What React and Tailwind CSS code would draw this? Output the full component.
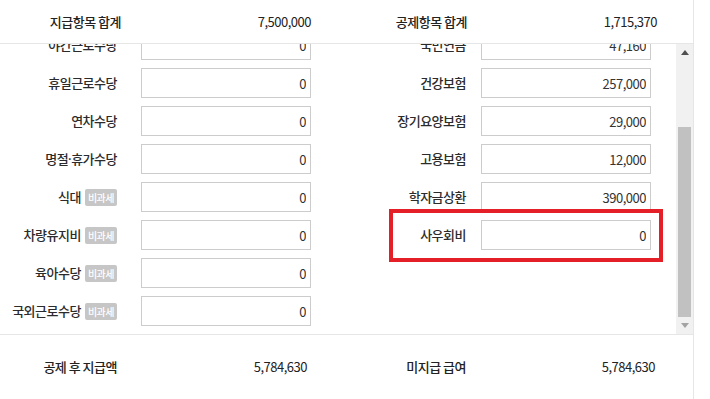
import React from 'react'

const left = [
  { label: '야간근로수당', value: '0' },
  { label: '휴일근로수당', value: '0' },
  { label: '연차수당', value: '0' },
  { label: <>명절<span style={{ fontFamily: '"Noto Sans", sans-serif' }}>·</span>휴가수당</>, value: '0' },
  { label: '식대', value: '0', taxFree: true },
  { label: '차량유지비', value: '0', taxFree: true },
  { label: '육아수당', value: '0', taxFree: true },
  { label: '국외근로수당', value: '0', taxFree: true },
]

const right = [
  { label: '국민연금', value: '47,160' },
  { label: '건강보험', value: '257,000' },
  { label: '장기요양보험', value: '29,000' },
  { label: '고용보험', value: '12,000' },
  { label: '학자금상환', value: '390,000' },
  { label: '사우회비', value: '0' },
]

function Field({ value }) {
  return (
    <input
      readOnly
      value={value}
      className="w-[170px] h-[30px] border border-[#cccccc] bg-white text-right pr-[4px] text-[13px] tracking-[-0.5px] text-[#333] outline-none"
    />
  )
}

function Badge() {
  return (
    <span className="ml-[4px] h-[17px] px-[3px] rounded-[2px] bg-[#c6c6c6] text-white text-[10px] leading-[17px] tracking-[-0.5px]">
      비과세
    </span>
  )
}

export default function App() {
  return (
    <div
      className="relative w-[710px] h-[399px] bg-white overflow-hidden text-[#2b2b2b]"
      style={{ fontFamily: '"Noto Sans CJK KR", "Noto Sans", sans-serif' }}
    >
      <div className="w-[694px] h-full border-r border-[#e6e6e6] flex flex-col">
        {/* totals header */}
        <div className="h-[44px] shrink-0 border-b border-[#e6e6e6] flex items-center text-[13px] tracking-[-0.5px] text-[#222] font-medium">
          <span className="w-[121px] text-right">지급항목 합계</span>
          <span className="w-[190px] text-right font-normal">7,500,000</span>
          <span className="w-[156px] text-right">공제항목 합계</span>
          <span className="w-[190px] text-right font-normal">1,715,370</span>
        </div>

        {/* scrolled item list */}
        <div className="h-[291px] shrink-0 border-b border-[#e6e6e6] flex">
          <div className="flex-1 overflow-hidden">
            <div className="-mt-[14px] flex flex-col gap-[8px]">
              {left.map((l, i) => {
                const r = right[i]
                return (
                  <div key={i} className="h-[30px] flex items-center text-[13px] tracking-[-0.5px]">
                    <div className="w-[117px] flex items-center justify-end whitespace-nowrap font-medium">
                      <span>{l.label}</span>
                      {l.taxFree && <Badge />}
                    </div>
                    <div className="ml-[24px]">
                      <Field value={l.value} />
                    </div>
                    {r && (
                      <>
                        <div className="w-[155px] text-right whitespace-nowrap font-medium">{r.label}</div>
                        <div className="ml-[15px]">
                          <Field value={r.value} />
                        </div>
                      </>
                    )}
                  </div>
                )
              })}
            </div>
          </div>
          <div className="w-[17px] bg-[#f1f1f1] flex flex-col">
            <div className="h-[17px] flex items-center justify-center">
              <svg width="8" height="5" viewBox="0 0 8 5"><path d="M0 5 L4 0 L8 5 Z" fill="#505050" /></svg>
            </div>
            <div className="flex-1 flex flex-col justify-end px-[2px]">
              <div className="h-[190px] bg-[#c1c1c1]" />
            </div>
            <div className="h-[17px] flex items-center justify-center">
              <svg width="8" height="5" viewBox="0 0 8 5"><path d="M0 0 L8 0 L4 5 Z" fill="#a3a3a3" /></svg>
            </div>
          </div>
        </div>

        {/* footer */}
        <div className="flex-1 flex items-center text-[13px] tracking-[-0.5px] text-[#222] pb-[1px] font-medium">
          <span className="w-[117px] text-right">공제 후 지급액</span>
          <span className="w-[190px] text-right font-normal">5,784,630</span>
          <span className="w-[159px] text-right">미지급 급여</span>
          <span className="w-[189px] text-right font-normal">5,784,630</span>
        </div>
      </div>

      {/* highlight annotation */}
      <div className="absolute left-[389px] top-[209px] w-[274px] h-[53px] border-[4px] border-[#e51f28]" />
    </div>
  )
}
